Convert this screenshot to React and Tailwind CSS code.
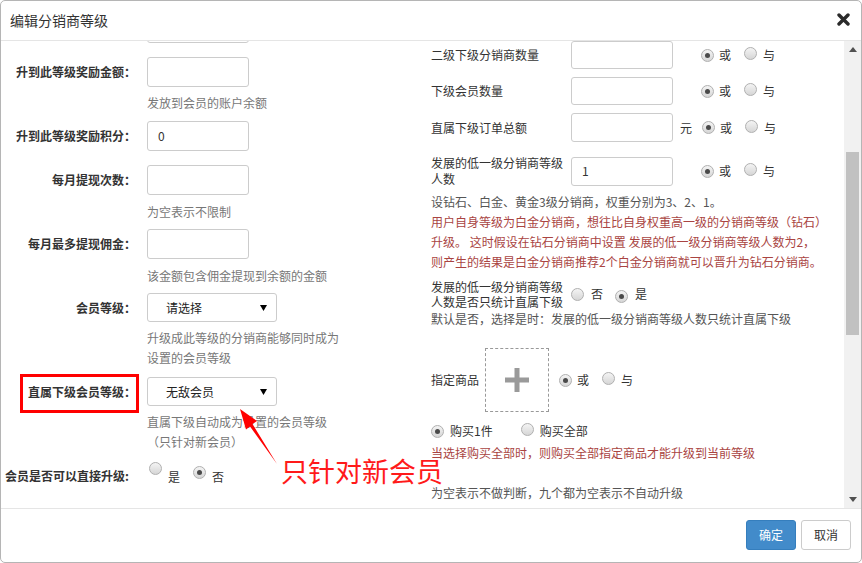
import React from "react";

const Radio = ({ checked }) => (
  <span className="inline-flex w-[13px] h-[13px] rounded-full border border-[#b0b0b0] bg-gradient-to-b from-[#f4f4f4] to-[#d6d6d6] items-center justify-center shrink-0">
    {checked && <span className="w-[5px] h-[5px] rounded-full bg-[#4a4a4a]" />}
  </span>
);

const OrAnd = ({ className = "" }) => (
  <div className={`flex items-center ${className}`}>
    <Radio checked />
    <span className="ml-[5px]">或</span>
    <span className="ml-[13px]"><Radio /></span>
    <span className="ml-[6px]">与</span>
  </div>
);

const Input = ({ value, h = "h-[30px]" }) => (
  <div className={`w-[102px] ${h} border border-[#ccc] rounded-[3px] bg-white flex items-center px-[10px] text-[12px] text-[#333]`}>
    {value}
  </div>
);

const Select = ({ text }) => (
  <div className="w-[130px] h-[29px] border border-[#ccc] rounded-[3px] bg-white flex items-center justify-between pl-[18px] pr-[9px] text-[12px] text-[#222]">
    <span>{text}</span>
    <svg width="7" height="6" viewBox="0 0 7 6"><path d="M0 0 H7 L3.5 6 Z" fill="#000" /></svg>
  </div>
);

const LeftRow = ({ label, children, className = "" }) => (
  <div className={`flex items-center ${className}`}>
    <div className="w-[135px] text-right font-bold text-[#333]">{label}</div>
    <div className="ml-[11px]">{children}</div>
  </div>
);

const Help = ({ children, className = "" }) => (
  <div className={`ml-[146px] leading-[20px] text-[#777] ${className}`}>{children}</div>
);

export default function App() {
  return (
    <div className="w-[862px] h-[563px] bg-white border border-[#b5b5b5] rounded-[5px] overflow-hidden flex flex-col text-[12px] text-[#333] font-['Noto_Sans_CJK_SC',sans-serif] relative">
      {/* header */}
      <div className="h-[40px] shrink-0 border-b border-[#e5e5e5] flex items-center justify-between pl-[9px] pr-[10px]">
        <span className="text-[14px] text-[#333]">编辑分销商等级</span>
        <svg width="13" height="13" viewBox="0 0 13 13" className="mr-[1px] -mt-[2px]">
          <path d="M2 2 L11 11 M11 2 L2 11" stroke="#2a2a2a" strokeWidth="3.4" strokeLinecap="round" />
        </svg>
      </div>

      {/* body */}
      <div className="h-[467px] shrink-0 flex overflow-hidden">
        {/* left column */}
        <div className="w-[430px] shrink-0 flex flex-col leading-[20px]">
          <div className="ml-[146px] -mt-[28px]">
            <Input />
          </div>
          <LeftRow label="升到此等级奖励金额：" className="mt-[14px]"><Input /></LeftRow>
          <Help className="mt-[6px]">发放到会员的账户余额</Help>
          <LeftRow label="升到此等级奖励积分：" className="mt-[8px]"><Input value="0" /></LeftRow>
          <LeftRow label="每月提现次数：" className="mt-[14px]"><Input /></LeftRow>
          <Help className="mt-[7px]">为空表示不限制</Help>
          <LeftRow label="每月最多提现佣金：" className="mt-[7px]"><Input /></LeftRow>
          <Help className="mt-[7px]">该金额包含佣金提现到余额的金额</Help>
          <LeftRow label="会员等级：" className="mt-[7px]"><Select text="请选择" /></LeftRow>
          <Help className="mt-[6px]">
            升级成此等级的分销商能够同时成为<br />设置的会员等级
          </Help>
          <LeftRow label="直属下级会员等级：" className="mt-[9px]"><Select text="无敌会员" /></LeftRow>
          <Help className="mt-[6px]">
            直属下级自动成为设置的会员等级<br />（只针对新会员）
          </Help>
          <div className="mt-[13px] ml-[4px] flex items-center">
            <span className="font-bold text-[#333] w-[144px]">会员是否可以直接升级:</span>
            <span className="-mt-[12px]"><Radio /></span>
            <span className="ml-[6px] mt-[2px]">是</span>
            <span className="ml-[13px] -mt-[12px]"><Radio checked /></span>
            <span className="ml-[6px] mt-[2px]">否</span>
          </div>
        </div>

        {/* right column */}
        <div className="flex-1 flex flex-col">
          <div className="flex items-center h-[28px]">
            <span className="w-[140px]">二级下级分销商数量</span>
            <Input h="h-[28px]" />
            <OrAnd className="ml-[28px]" />
          </div>
          <div className="flex items-center h-[28px] mt-[8px]">
            <span className="w-[140px]">下级会员数量</span>
            <Input h="h-[28px]" />
            <OrAnd className="ml-[28px]" />
          </div>
          <div className="flex items-center h-[29px] mt-[8px]">
            <span className="w-[140px]">直属下级订单总额</span>
            <Input h="h-[29px]" />
            <span className="w-[29px] pl-[7px]">元</span>
            <OrAnd />
          </div>
          <div className="flex items-center h-[32px] mt-[13px]">
            <span className="w-[140px] leading-[16px]">发展的低一级分销商等级<br />人数</span>
            <Input value="1" h="h-[29px]" />
            <OrAnd className="ml-[28px]" />
          </div>
          <div className="mt-[5px] leading-[20px]">
            <div className="text-[#555]">设钻石、白金、黄金3级分销商，权重分别为3、2、1。</div>
            <div className="text-[#a94442]">
              用户自身等级为白金分销商，想往比自身权重高一级的分销商等级（钻石）<br />
              升级。 这时假设在钻石分销商中设置 发展的低一级分销商等级人数为2，<br />
              则产生的结果是白金分销商推荐2个白金分销商就可以晋升为钻石分销商。
            </div>
          </div>
          <div className="flex items-center mt-[7px]">
            <span className="w-[140px] leading-[15px]">发展的低一级分销商等级<br />人数是否只统计直属下级</span>
            <Radio />
            <span className="ml-[7px]">否</span>
            <span className="ml-[12px]"><Radio checked /></span>
            <span className="ml-[7px]">是</span>
          </div>
          <div className="mt-[2px] leading-[16px] text-[#555]">默认是否，选择是时：发展的低一级分销商等级人数只统计直属下级</div>
          <div className="flex items-center mt-[21px]">
            <span className="w-[54px]">指定商品</span>
            <div className="w-[64px] h-[64px] border border-dashed border-[#999] flex items-center justify-center">
              <svg width="24" height="24" viewBox="0 0 24 24">
                <path d="M9.5 0 H14.5 V9.5 H24 V14.5 H14.5 V24 H9.5 V14.5 H0 V9.5 H9.5 Z" fill="#9a9a9a" />
              </svg>
            </div>
            <OrAnd className="ml-[10px]" />
          </div>
          <div className="flex items-center mt-[9px] leading-[20px]">
            <Radio checked />
            <span className="ml-[6px]">购买1件</span>
            <span className="ml-[28px]"><Radio /></span>
            <span className="ml-[6px]">购买全部</span>
          </div>
          <div className="mt-[2px] leading-[20px] text-[#a94442]">当选择购买全部时，则购买全部指定商品才能升级到当前等级</div>
          <div className="mt-[20px] leading-[20px] text-[#555]">为空表示不做判断，九个都为空表示不自动升级</div>
        </div>

        {/* scrollbar */}
        <div className="w-[17px] shrink-0 bg-[#f1f1f1] flex flex-col items-center">
          <div className="h-[17px] flex items-center justify-center">
            <svg width="8" height="5" viewBox="0 0 8 5"><path d="M0 5 L4 0 L8 5 Z" fill="#505050" /></svg>
          </div>
          <div className="mt-[94px] w-[13px] h-[183px] bg-[#c1c1c1]" />
          <div className="flex-1" />
          <div className="h-[17px] flex items-center justify-center">
            <svg width="8" height="5" viewBox="0 0 8 5"><path d="M0 0 L4 5 L8 0 Z" fill="#505050" /></svg>
          </div>
        </div>
      </div>

      {/* footer */}
      <div className="flex-1 border-t border-[#e5e5e5] flex items-start justify-end pt-[11px] pr-[10px] gap-[5px]">
        <button className="w-[50px] h-[30px] rounded-[3px] bg-[#428bca] border border-[#357ebd] text-white text-[12px]">确定</button>
        <button className="w-[50px] h-[30px] rounded-[3px] bg-white border border-[#ccc] text-[#333] text-[12px]">取消</button>
      </div>

      {/* annotations */}
      <div className="absolute left-[19px] top-[373px] w-[119px] h-[39px] border-[3px] border-[#ff0000]" />
      <svg className="absolute left-0 top-0 pointer-events-none" width="862" height="563">
        <polygon points="239,408 256,420 251.5,423 276,463 249,425.5 245,428.5" fill="#ff0000" />
      </svg>
      <div className="absolute left-[280px] top-[452px] text-[27px] leading-[36px] text-[#ff1a1a]">只针对新会员</div>
    </div>
  );
}
